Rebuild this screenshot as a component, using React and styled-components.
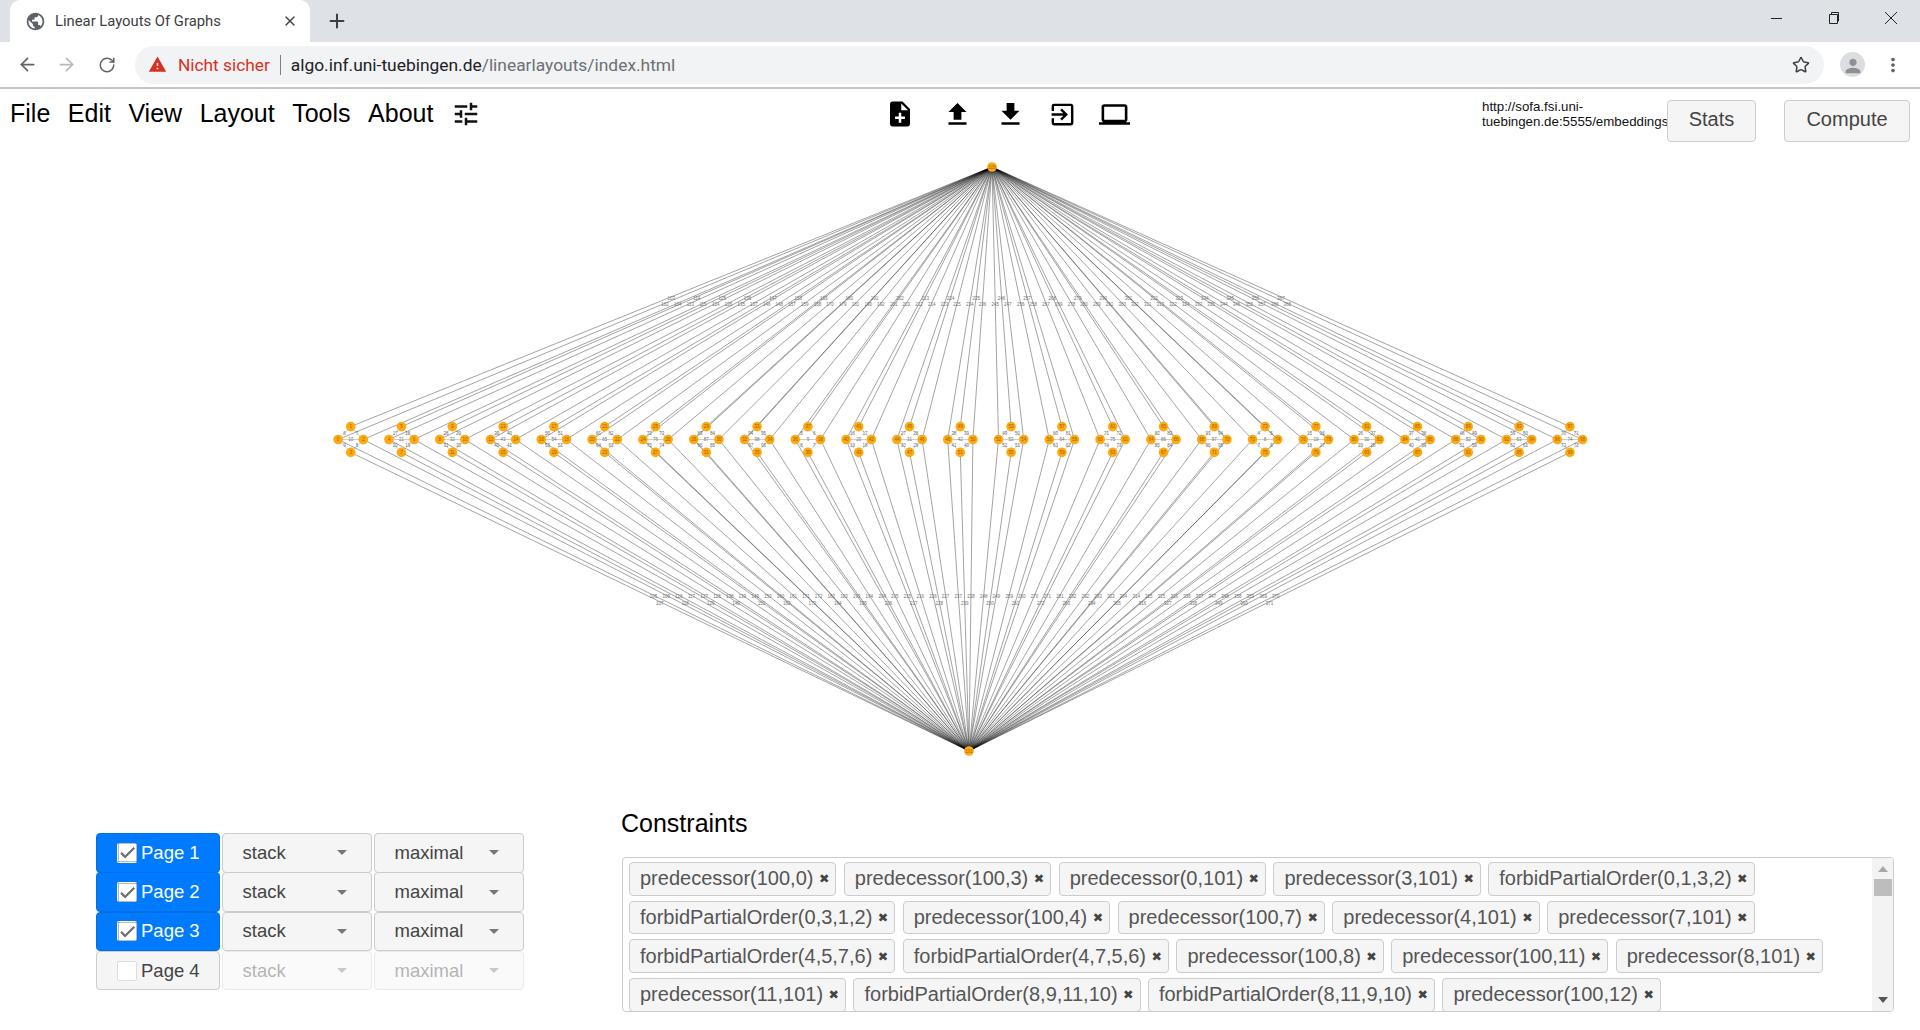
import React from 'react';
import styled, { createGlobalStyle } from 'styled-components';
import { ArrowLeft, ArrowRight, RotateCw, Star, X, Plus } from 'lucide-react';
import {
  MdPublic,
  MdWarning,
  MdNoteAdd,
  MdFileUpload,
  MdFileDownload,
  MdExitToApp,
  MdLaptop,
  MdTune,
  MdCheck,
  MdPerson,
  MdMoreVert,
} from 'react-icons/md';

const MENU = ['File', 'Edit', 'View', 'Layout', 'Tools', 'About'];
const PAGES = [
  { name: 'Page 1', on: true },
  { name: 'Page 2', on: true },
  { name: 'Page 3', on: true },
  { name: 'Page 4', on: false },
];
const CONSTRAINTS = [
  'predecessor(100,0)',
  'predecessor(100,3)',
  'predecessor(0,101)',
  'predecessor(3,101)',
  'forbidPartialOrder(0,1,3,2)',
  'forbidPartialOrder(0,3,1,2)',
  'predecessor(100,4)',
  'predecessor(100,7)',
  'predecessor(4,101)',
  'predecessor(7,101)',
  'forbidPartialOrder(4,5,7,6)',
  'forbidPartialOrder(4,7,5,6)',
  'predecessor(100,8)',
  'predecessor(100,11)',
  'predecessor(8,101)',
  'predecessor(11,101)',
  'forbidPartialOrder(8,9,11,10)',
  'forbidPartialOrder(8,11,9,10)',
  'predecessor(100,12)',
];

// graph geometry, in page coordinates
const TOP = { x: 992, y: 167, id: 100 };
const BOTTOM = { x: 969, y: 751, id: 101 };
const clusters = Array.from({ length: 25 }, (_, i) => {
  const cx = 350.7 + i * 50.8;
  const cy = 439.5;
  const base = i * 4;
  return [
    { x: cx - 12.6, y: cy, id: base },
    { x: cx, y: cy - 12.9, id: base + 1 },
    { x: cx + 12.6, y: cy, id: base + 2 },
    { x: cx, y: cy + 12.9, id: base + 3 },
  ];
});

const Graph = () => {
  const edges = [];
  clusters.forEach((c) => {
    [0, 1, 2].forEach((k) => edges.push({ a: TOP, b: c[k], outer: true }));
    [0, 2, 3].forEach((k) => edges.push({ a: BOTTOM, b: c[k], outer: true }));
    [[0, 1], [1, 2], [2, 3], [3, 0], [0, 2]].forEach(([p, q]) =>
      edges.push({ a: c[p], b: c[q], outer: false })
    );
  });
  const nodes = [...clusters.flat(), TOP, BOTTOM];
  return (
    <GraphSvg viewBox="0 150 1920 661">
      {edges.map((e, i) => (
        <line
          key={i}
          x1={e.a.x}
          y1={e.a.y}
          x2={e.b.x}
          y2={e.b.y}
          stroke="#000"
          strokeOpacity={e.outer ? 0.36 : 0.28}
          strokeWidth={e.outer ? 1 : 0.7}
        />
      ))}
      {edges.map((e, i) => (
        <text
          key={i}
          x={(e.a.x + e.b.x) / 2}
          y={(e.a.y + e.b.y) / 2 + (e.outer ? 3 : 1.5)}
          textAnchor="middle"
          fontSize="4.5"
          fontFamily="Liberation Sans, sans-serif"
          fill="#6f6f6f"
        >
          {e.outer ? 102 + i : i % 100}
        </text>
      ))}
      {nodes.map((n) => (
        <g key={n.id}>
          <circle cx={n.x} cy={n.y} r="4.8" fill="#ffa90f" />
          <text
            x={n.x}
            y={n.y + 1.6}
            textAnchor="middle"
            fontSize="4.5"
            fontFamily="Liberation Sans, sans-serif"
            fill="#8a6410"
          >
            {n.id}
          </text>
        </g>
      ))}
    </GraphSvg>
  );
};

const WindowControls = () => (
  <WindowButtons>
    <svg width="14" height="12" viewBox="0 0 14 12">
      <path d="M1 6.500h11" stroke="#222" fill="none" />
    </svg>
    <svg width="14" height="14" viewBox="0 0 14 14">
      <path d="M2.500 3.500h8v9h-8zM4.500 3.500v-2h7v8.500h-1" stroke="#222" fill="none" />
    </svg>
    <svg width="14" height="14" viewBox="0 0 14 14">
      <path d="M1 1l12 12M13 1L1 13" stroke="#222" fill="none" />
    </svg>
  </WindowButtons>
);

const App = () => (
  <Page>
    <GlobalStyle />
    <TabStrip>
      <Tab>
        <MdPublic size={21} color="#5f6368" />
        <TabTitle>Linear Layouts Of Graphs</TabTitle>
        <X size={16} color="#3c4043" />
      </Tab>
      <NewTab>
        <Plus size={22} strokeWidth={2.2} color="#3c4043" />
      </NewTab>
      <WindowControls />
    </TabStrip>
    <Toolbar>
      <ArrowLeft size={21} color="#5f6368" />
      <ArrowRight size={21} color="#b5b8bc" />
      <RotateCw size={18} color="#5f6368" />
      <AddressBar>
        <MdWarning size={19} color="#d93025" />
        <Insecure>Nicht sicher</Insecure>
        <Divider />
        <Url>
          algo.inf.uni-tuebingen.de<UrlPath>/linearlayouts/index.html</UrlPath>
        </Url>
        <Star size={18} color="#3c4043" />
      </AddressBar>
      <Avatar>
        <MdPerson size={22} color="#8d9094" />
      </Avatar>
      <MdMoreVert size={22} color="#5f6368" />
    </Toolbar>

    <Header>
      <Menu>
        {MENU.map((m) => (
          <MenuItem key={m}>{m}</MenuItem>
        ))}
        <MdTune size={30} color="#111" />
      </Menu>
      <IconBar>
        <MdNoteAdd size={30} />
        <MdFileUpload size={31} />
        <MdFileDownload size={31} />
        <MdExitToApp size={29} />
        <MdLaptop size={31} />
      </IconBar>
      <ServerArea>
        <ServerUrl>
          http://sofa.fsi.uni-
          <br />
          tuebingen.de:5555/embeddings
        </ServerUrl>
        <PlainButton>Stats</PlainButton>
        <ComputeButton>Compute</ComputeButton>
      </ServerArea>
    </Header>

    <Graph />

    <Bottom>
      <PagePanel>
        {PAGES.map((p) => (
          <PageRow key={p.name}>
            <PageToggle $on={p.on}>
              <CheckBox $on={p.on}>{p.on && <MdCheck size={19} color="#707070" stroke="#707070" strokeWidth={1.2} />}</CheckBox>
              {p.name}
            </PageToggle>
            <PageSelect $off={!p.on}>
              stack
              <Caret />
            </PageSelect>
            <PageSelect $off={!p.on}>
              maximal
              <Caret />
            </PageSelect>
          </PageRow>
        ))}
      </PagePanel>
      <ConstraintPanel>
        <Heading>Constraints</Heading>
        <TagBox>
          <TagList>
            {CONSTRAINTS.map((c) => (
              <Tag key={c}>
                {c}
                <TagRemove>✖</TagRemove>
              </Tag>
            ))}
          </TagList>
          <ScrollBar>
            <ArrowUp />
            <Thumb />
            <ArrowDown />
          </ScrollBar>
        </TagBox>
      </ConstraintPanel>
    </Bottom>
  </Page>
);

export default App;

const GlobalStyle = createGlobalStyle`
  html, body {
    margin: 0;
    padding: 0;
    background: #fff;
    overflow: hidden;
  }
  * {
    box-sizing: border-box;
  }
`;

const Page = styled.div`
  width: 1920px;
  height: 1030px;
  font-family: 'Liberation Sans', Arial, sans-serif;
  color: #000;
  overflow: hidden;
`;

const TabStrip = styled.div`
  height: 42px;
  background: #dee1e6;
  display: flex;
  align-items: flex-end;
  padding-left: 10px;
`;

const Tab = styled.div`
  width: 300px;
  height: 42px;
  background: #fff;
  border-radius: 10px 10px 0 0;
  display: flex;
  align-items: center;
  padding: 0 12px 0 15px;
  gap: 9px;
`;

const TabTitle = styled.span`
  flex: 1;
  font-family: Roboto, sans-serif;
  font-size: 14.8px;
  color: #3c4043;
`;

const NewTab = styled.div`
  height: 42px;
  margin-left: 16px;
  display: flex;
  align-items: center;
`;

const WindowButtons = styled.div`
  margin-left: auto;
  height: 42px;
  width: 150px;
  padding: 0 22px 6px 0;
  display: flex;
  align-items: center;
  justify-content: space-between;
`;

const Toolbar = styled.div`
  height: 47px;
  background: #fff;
  border-bottom: 2px solid #c4c4c4;
  display: flex;
  align-items: center;
  padding: 0 0 0 17px;

  & > svg:nth-child(1) {
    margin-right: 18px;
  }
  & > svg:nth-child(2) {
    margin-right: 21px;
  }
  & > svg:nth-child(3) {
    margin-right: 19px;
  }
`;

const AddressBar = styled.div`
  width: 1689px;
  height: 38px;
  border-radius: 19px;
  background: #f1f3f4;
  display: flex;
  align-items: center;
  padding: 0 14px 0 13px;
`;

const Insecure = styled.span`
  font-family: Roboto, sans-serif;
  font-size: 17.3px;
  color: #d93025;
  margin-left: 11px;
`;

const Divider = styled.span`
  width: 1px;
  height: 20px;
  background: #7d8084;
  margin: 0 10px;
`;

const Url = styled.span`
  flex: 1;
  font-family: Roboto, sans-serif;
  font-size: 17.4px;
  color: #202124;
`;

const UrlPath = styled.span`
  color: #6c7074;
`;

const Avatar = styled.div`
  width: 25px;
  height: 25px;
  border-radius: 50%;
  background: #dcdde0;
  margin: 0 17px 0 16px;
  display: flex;
  align-items: flex-end;
  justify-content: center;
  overflow: hidden;
`;

const Header = styled.div`
  height: 61px;
  display: grid;
  grid-template-columns: 880px 300px 1fr;
  align-items: flex-start;
`;

const Menu = styled.nav`
  height: 49px;
  padding-left: 10px;
  display: flex;
  align-items: center;
  gap: 17.5px;
`;

const MenuItem = styled.span`
  font-size: 25px;
  line-height: 49px;
`;

const IconBar = styled.div`
  height: 50px;
  display: flex;
  align-items: center;
  gap: 22px;
  padding-left: 5px;
  color: #000;

  & > svg:first-child {
    margin-right: 5px;
  }
`;

const ServerArea = styled.div`
  display: flex;
  align-items: flex-start;
  padding: 11px 10px 0 0;
  justify-content: flex-end;
`;

const ServerUrl = styled.div`
  width: 185px;
  margin-top: -1px;
  font-size: 13.3px;
  line-height: 15px;
  color: #111;
  white-space: nowrap;
`;

const PlainButton = styled.button`
  width: 89px;
  height: 42px;
  padding: 0 0 3px;
  font-family: inherit;
  font-size: 20px;
  color: #444;
  background: #f5f5f5;
  border: 1px solid #ccc;
  border-radius: 4px;
`;

const ComputeButton = styled(PlainButton)`
  width: 126px;
  margin-left: 28px;
`;

const GraphSvg = styled.svg`
  display: block;
  width: 1920px;
  height: 661px;
`;

const Bottom = styled.div`
  display: flex;
  padding-left: 96px;
`;

const PagePanel = styled.div`
  width: 428px;
  margin-right: 98px;
  padding-top: 22px;
`;

const PageRow = styled.div`
  display: flex;
  gap: 2px;
  height: 39.3px;
`;

const PageToggle = styled.div`
  width: 124px;
  height: 39.5px;
  border-radius: 4px;
  font-size: 18.5px;
  display: flex;
  align-items: center;
  padding-left: 20px;
  gap: 4px;
  background: ${(p) => (p.$on ? '#007bff' : '#f5f5f5')};
  color: ${(p) => (p.$on ? '#fff' : '#444')};
  border: 1px solid ${(p) => (p.$on ? '#006fe6' : '#ccc')};
`;

const CheckBox = styled.span`
  width: 20px;
  height: 20px;
  background: #fff;
  border-radius: 2px;
  border: ${(p) => (p.$on ? 'none' : '1px solid #ddd')};
  display: flex;
  align-items: center;
  justify-content: center;
`;

const PageSelect = styled.div`
  width: 150px;
  height: 39.5px;
  border-radius: 4px;
  font-size: 18.5px;
  padding: 0 16px 0 19.5px;
  display: flex;
  align-items: center;
  justify-content: space-between;
  background: #f5f5f5;
  color: #444;
  border: 1px solid #ccc;
  opacity: ${(p) => (p.$off ? 0.4 : 1)};
`;

const Caret = styled.span`
  width: 0;
  height: 0;
  border-left: 5.5px solid transparent;
  border-right: 5.5px solid transparent;
  border-top: 5.5px solid #777;
  margin-right: 8px;
`;

const ConstraintPanel = styled.div`
  width: 1272px;
`;

const Heading = styled.h2`
  margin: 0 0 18px -1px;
  height: 28px;
  font-size: 25px;
  font-weight: 400;
  line-height: 24px;
`;

const TagBox = styled.div`
  height: 155px;
  border: 1px solid #ccc;
  border-radius: 4px;
  display: flex;
  overflow: hidden;
`;

const TagList = styled.div`
  flex: 1;
  padding: 4px 0 0 6px;
  display: flex;
  flex-wrap: wrap;
  align-content: flex-start;
  gap: 5px 7.4px;
  overflow: hidden;
`;

const Tag = styled.div`
  height: 33.7px;
  padding: 0 6px 0 10px;
  display: flex;
  align-items: center;
  font-size: 20px;
  color: #555;
  background: #f5f5f5;
  border: 1px solid #ccc;
  border-radius: 4px;
`;

const TagRemove = styled.span`
  margin-left: 5.5px;
  font-family: 'DejaVu Sans', sans-serif;
  font-size: 12.5px;
  color: #444;
`;

const ScrollBar = styled.div`
  width: 21px;
  background: #f3f3f3;
  display: flex;
  flex-direction: column;
  align-items: center;
  padding: 8px 0 8px;
`;

const ArrowUp = styled.span`
  width: 0;
  height: 0;
  border-left: 5px solid transparent;
  border-right: 5px solid transparent;
  border-bottom: 6px solid #a8a8a8;
`;

const ArrowDown = styled.span`
  width: 0;
  height: 0;
  margin-top: auto;
  border-left: 5px solid transparent;
  border-right: 5px solid transparent;
  border-top: 6px solid #555;
`;

const Thumb = styled.span`
  width: 18px;
  height: 17px;
  margin-top: 7px;
  background: #bdbdbd;
`;
